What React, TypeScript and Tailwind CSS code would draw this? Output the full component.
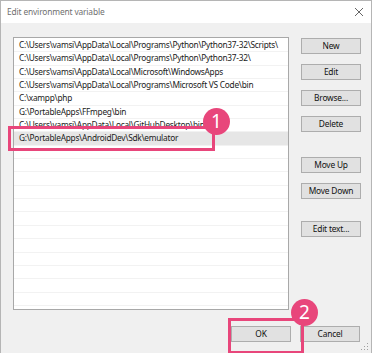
const paths = [
  "C:\\Users\\vamsi\\AppData\\Local\\Programs\\Python\\Python37-32\\Scripts\\",
  "C:\\Users\\vamsi\\AppData\\Local\\Programs\\Python\\Python37-32\\",
  "C:\\Users\\vamsi\\AppData\\Local\\Microsoft\\WindowsApps",
  "C:\\Users\\vamsi\\AppData\\Local\\Programs\\Microsoft VS Code\\bin",
  "C:\\xampp\\php",
  "G:\\PortableApps\\FFmpeg\\bin",
  "C:\\Users\\vamsi\\AppData\\Local\\GitHubDesktop\\bin",
  "G:\\PortableApps\\AndroidDev\\Sdk\\emulator",
];

const EMPTY_ROWS = 12;

function WinButton({ label, className = "" }: { label: string; className?: string }) {
  return (
    <div
      className={`w-[60px] h-[16px] flex items-center justify-center bg-[#e1e1e1] border border-[#adadad] text-[8.4px] tracking-[-0.2px] text-[#111] leading-none ${className}`}
    >
      {label}
    </div>
  );
}

function Badge({ n, className }: { n: string; className: string }) {
  return (
    <div
      className={`absolute w-[27px] h-[27px] rounded-full bg-[#e8467b] flex items-center justify-center text-white text-[19px] leading-none ${className}`}
    >
      {n}
    </div>
  );
}

export default function App() {
  return (
    <div
      className="relative w-[372px] h-[353px] overflow-hidden bg-[#f0f0f0] border-x border-t border-[#b5b5b5] flex flex-col"
      style={{ fontFamily: '"Noto Sans", "Liberation Sans", sans-serif' }}
    >
      {/* title bar */}
      <div className="h-[22px] shrink-0 bg-white flex items-center justify-between pl-[6px] pr-[7px]">
        <span className="text-[8.4px] tracking-[-0.15px] text-[#6f6f6f]">Edit environment variable</span>
        <svg width="10" height="10" viewBox="0 0 10 10">
          <path d="M1 1 L9 9 M9 1 L1 9" stroke="#555" strokeWidth="0.9" fill="none" />
        </svg>
      </div>

      <div className="flex-1 flex flex-col pl-[12px] pr-[10px] pt-[14px]">
        <div className="flex gap-[12px]">
          {/* list */}
          <div className="w-[277px] h-[273px] bg-white border border-[#a8a8a8] pt-px overflow-hidden">
            {paths.map((p, i) => (
              <div
                key={p}
                className={`h-[13.35px] flex items-center pl-[5px] text-[8.3px] tracking-[-0.25px] text-[#1a1a1a] whitespace-nowrap border-b border-[#f2f2f2] ${
                  i === 7 ? "bg-[#e6e6e6]" : ""
                }`}
              >
                {p}
              </div>
            ))}
            {Array.from({ length: EMPTY_ROWS }).map((_, i) => (
              <div key={i} className="h-[13.35px] border-b border-[#f2f2f2]" />
            ))}
          </div>

          {/* buttons */}
          <div className="flex flex-col pt-px">
            <WinButton label="New" />
            <WinButton label="Edit" className="mt-[10px]" />
            <WinButton label="Browse..." className="mt-[10px]" />
            <WinButton label="Delete" className="mt-[10px]" />
            <WinButton label="Move Up" className="mt-[25px]" />
            <WinButton label="Move Down" className="mt-[10px]" />
            <WinButton label="Edit text..." className="mt-[22px]" />
          </div>
        </div>

        <div className="flex justify-end gap-[9px] mt-[16px] pr-px">
          <WinButton label="OK" />
          <WinButton label="Cancel" />
        </div>
      </div>

      {/* resize grip */}
      <svg className="absolute right-[2px] bottom-[2px]" width="8" height="8" viewBox="0 0 8 8">
        <rect x="6" y="0" width="1" height="1" fill="#a0a0a0" />
        <rect x="6" y="3" width="1" height="1" fill="#a0a0a0" />
        <rect x="3" y="3" width="1" height="1" fill="#a0a0a0" />
        <rect x="6" y="6" width="1" height="1" fill="#a0a0a0" />
        <rect x="3" y="6" width="1" height="1" fill="#a0a0a0" />
        <rect x="0" y="6" width="1" height="1" fill="#a0a0a0" />
      </svg>

      {/* annotations */}
      <div className="absolute left-[7px] top-[125px] w-[207px] h-[25px] border-[3px] border-[#e8467b]" />
      <Badge n="1" className="left-[202px] top-[107px]" />
      <div className="absolute left-[227px] top-[317px] w-[76px] h-[36px] border-[3px] border-[#e8467b]" />
      <Badge n="2" className="left-[290px] top-[298px]" />
    </div>
  );
}
